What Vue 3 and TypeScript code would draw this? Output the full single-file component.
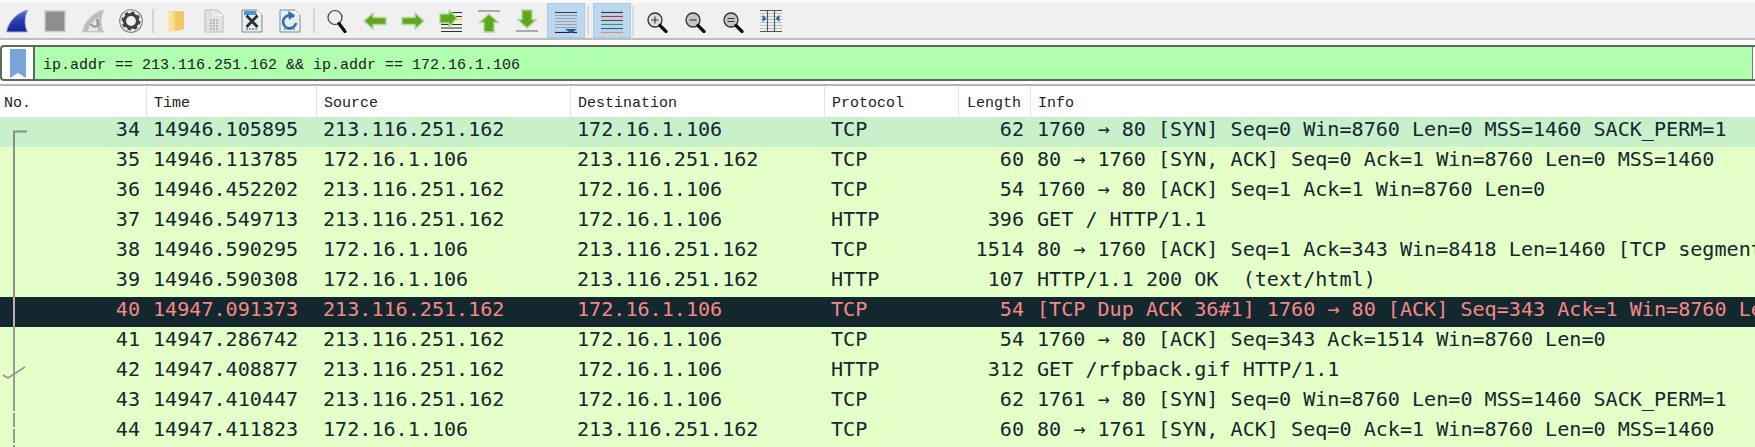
<script setup lang="ts">
type Row = { no: number; time: string; src: string; dst: string; proto: string; len: number; info: string; kind?: string }
const A = '213.116.251.162'
const B = '172.16.1.106'
const rows: Row[] = [
  { no: 34, time: '14946.105895', src: A, dst: B, proto: 'TCP', len: 62, info: '1760 → 80 [SYN] Seq=0 Win=8760 Len=0 MSS=1460 SACK_PERM=1', kind: 'sel' },
  { no: 35, time: '14946.113785', src: B, dst: A, proto: 'TCP', len: 60, info: '80 → 1760 [SYN, ACK] Seq=0 Ack=1 Win=8760 Len=0 MSS=1460' },
  { no: 36, time: '14946.452202', src: A, dst: B, proto: 'TCP', len: 54, info: '1760 → 80 [ACK] Seq=1 Ack=1 Win=8760 Len=0' },
  { no: 37, time: '14946.549713', src: A, dst: B, proto: 'HTTP', len: 396, info: 'GET / HTTP/1.1' },
  { no: 38, time: '14946.590295', src: B, dst: A, proto: 'TCP', len: 1514, info: '80 → 1760 [ACK] Seq=1 Ack=343 Win=8418 Len=1460 [TCP segment of a reassembled PDU]' },
  { no: 39, time: '14946.590308', src: B, dst: A, proto: 'HTTP', len: 107, info: 'HTTP/1.1 200 OK  (text/html)' },
  { no: 40, time: '14947.091373', src: A, dst: B, proto: 'TCP', len: 54, info: '[TCP Dup ACK 36#1] 1760 → 80 [ACK] Seq=343 Ack=1 Win=8760 Len=0', kind: 'bad' },
  { no: 41, time: '14947.286742', src: A, dst: B, proto: 'TCP', len: 54, info: '1760 → 80 [ACK] Seq=343 Ack=1514 Win=8760 Len=0' },
  { no: 42, time: '14947.408877', src: A, dst: B, proto: 'HTTP', len: 312, info: 'GET /rfpback.gif HTTP/1.1' },
  { no: 43, time: '14947.410447', src: A, dst: B, proto: 'TCP', len: 62, info: '1761 → 80 [SYN] Seq=0 Win=8760 Len=0 MSS=1460 SACK_PERM=1' },
  { no: 44, time: '14947.411823', src: B, dst: A, proto: 'TCP', len: 60, info: '80 → 1761 [SYN, ACK] Seq=0 Ack=1 Win=8760 Len=0 MSS=1460' },
]
</script>

<template>
  <div class="app">
    <div class="toolbar">
      <span class="tb"><svg viewBox="0 0 24 24"><defs><linearGradient id="fin" x1="0" y1="0" x2="0.2" y2="1"><stop offset="0" stop-color="#7d97e2"/><stop offset="0.55" stop-color="#2b3fb4"/><stop offset="1" stop-color="#18249a"/></linearGradient></defs><path d="M1.500 23C3 13 12 3 23 1c-3.500 6-4 15-.5 22z" fill="url(#fin)" stroke="#a3aed6"/></svg></span>
      <span class="tb"><svg viewBox="0 0 24 24"><rect x="2" y="2" width="20" height="20.500" fill="#8e8e8e" stroke="#c9c9c9" stroke-width="1.500"/></svg></span>
      <span class="tb"><svg viewBox="0 0 24 24"><path d="M1.500 23C3 13 12 3 23 1c-3.500 6-4 15-.5 22z" fill="#bcbcbc" stroke="#cfcfcf"/><path d="M7 22c1-6 6-11 11-14-2 4-2 10-1 14z" fill="#e6e6e6"/><path d="M10 15a4 4 0 0 0 7 1l-1-6" fill="none" stroke="#8f8f8f" stroke-width="2"/></svg></span>
      <span class="tb"><svg viewBox="0 0 24 24"><circle cx="12" cy="12" r="11.300" fill="#f0f0f0" stroke="#7f7f7f" stroke-width="1.100"/><circle cx="12" cy="12" r="6.500" fill="none" stroke="#3f3f3f" stroke-width="3.200"/><circle cx="12" cy="12" r="8.500" fill="none" stroke="#3f3f3f" stroke-width="2" stroke-dasharray="3.400 3.270"/></svg></span>
      <span class="sep s1"></span>
      <span class="tb"><svg viewBox="0 0 24 24"><defs><linearGradient id="fold" x1="0" y1="0" x2="1" y2="0"><stop offset="0" stop-color="#fdeaa8"/><stop offset="1" stop-color="#edc15a"/></linearGradient></defs><path d="M4 2h15l1 1v17l-10 2-5 1-1-1z" fill="url(#fold)"/><path d="M11 3h9v17l-9 2z" fill="#f0c964"/></svg></span>
      <span class="tb"><svg viewBox="0 0 24 24"><path d="M3 1h13l5 5v17H3z" fill="#e2e2e2" stroke="#bcbcbc"/><path d="M11 1l1 5h9" fill="none" stroke="#fff"/><path d="M8 11h9M8 14h9M8 17h9M8 20h9" stroke="#a8a8a8" stroke-width="1.600" stroke-dasharray="2 1"/></svg></span>
      <span class="tb"><svg viewBox="0 0 24 24"><path d="M2 1h15l5 5v17H2z" fill="#e8eef0" stroke="#7d8b92"/><path d="M4 2h12l1 4H4z" fill="#4c95d2"/><path d="M17 1l5 5h-5z" fill="#fff"/><path d="M6 20h12" stroke="#9a9a9a" stroke-width="2" stroke-dasharray="2 1"/><path d="M6.500 6.500l11 11.500M17.500 6.500l-11 11.500" stroke="#2d2d2d" stroke-width="2.800"/></svg></span>
      <span class="tb"><svg viewBox="0 0 24 24"><path d="M2 1h15l5 5v17H2z" fill="#e8eef0" stroke="#7d8b92"/><path d="M17 1l5 5h-5z" fill="#fff"/><path d="M6 20h12" stroke="#9a9a9a" stroke-width="2" stroke-dasharray="2 1"/><path d="M16 8a6.500 6.500 0 1 0 2 6" fill="none" stroke="#2c6fb0" stroke-width="2.600"/><path d="M10 2l7 4-6 5z" fill="#2c6fb0"/></svg></span>
      <span class="sep s2"></span>
      <span class="tb"><svg viewBox="0 0 24 24"><circle cx="10" cy="8.500" r="7" fill="#f0f0f0" stroke="#3a3a3a" stroke-width="1.200"/><path d="M14 14.500l6 8" stroke="#0e0e0e" stroke-width="3.200" stroke-linecap="round"/></svg></span>
      <span class="tb"><svg viewBox="0 0 24 24"><path d="M1 12l9-8v4.500h13v7H10V20z" fill="#5fa81e" stroke="#b4d6a0" stroke-width="1.600" stroke-linejoin="round"/></svg></span>
      <span class="tb"><svg viewBox="0 0 24 24"><path d="M23 12l-9-8v4.500H1v7h13V20z" fill="#5fa81e" stroke="#b4d6a0" stroke-width="1.600" stroke-linejoin="round"/></svg></span>
      <span class="tb"><svg viewBox="0 0 24 24"><path d="M12 3.500h11M14 7.500h9M2 15.500h21M2 19h21M2 22.500h21" stroke="#2f2f2f" stroke-width="1.200"/><path d="M16 9h7v3h-7z" fill="#f3e580"/><path d="M18 9l-8-8v4H1v9h9v4z" fill="#5fa81e" stroke="#b4d6a0" stroke-width="1.300" stroke-linejoin="round"/></svg></span>
      <span class="tb"><svg viewBox="0 0 24 24"><path d="M1 2h22" stroke="#9a9a9a" stroke-width="1.600"/><path d="M12 5l9.500 8.500H17V23H7v-9.500H2.500z" fill="#5fa81e" stroke="#b4d6a0" stroke-width="1.500" stroke-linejoin="round"/></svg></span>
      <span class="tb"><svg viewBox="0 0 24 24"><path d="M1 22h22" stroke="#9a9a9a" stroke-width="1.600"/><path d="M12 19l9.500-8.500H17V1H7v9.500H2.500z" fill="#5fa81e" stroke="#b4d6a0" stroke-width="1.500" stroke-linejoin="round"/></svg></span>
      <span class="tb on first"><svg viewBox="0 0 24 24"><path d="M1 3.500h22" stroke="#3a3a3a"/><path d="M1 6.500h22M1 9.500h22M1 12.500h22M1 15.500h22M1 18.500h22" stroke="#a0a0a0"/><path d="M1 23.500h22" stroke="#222" stroke-width="1.200"/><path d="M11 20h12l-6 4.500z" fill="#27599f"/></svg></span>
      <span class="sep short a"></span>
      <span class="tb on"><svg viewBox="0 0 24 24"><path d="M1 3.500h22" stroke="#4a3434" stroke-width="1.200"/><path d="M1 7.500h22" stroke="#c2304a" stroke-width="1.200"/><path d="M1 11.500h22" stroke="#555" stroke-width="1.200"/><path d="M1 15.500h22" stroke="#3f9a4a" stroke-width="1.200"/><path d="M1 19.500h22" stroke="#2f5fa8" stroke-width="1.200"/><path d="M1 23.500h22" stroke="#dd9a2a" stroke-width="1.200"/></svg></span>
      <span class="sep short b"></span>
      <span class="tb"><svg viewBox="0 0 24 24"><circle cx="10" cy="11" r="7" fill="#dcdcdc" stroke="#2f2f2f" stroke-width="1.300"/><path d="M6.500 11h7M10 7.500v7" stroke="#333" stroke-width="1.100"/><path d="M15 16.500l6 6" stroke="#0e0e0e" stroke-width="3.200" stroke-linecap="round"/></svg></span>
      <span class="tb"><svg viewBox="0 0 24 24"><circle cx="10" cy="11" r="7" fill="#c6c6c6" stroke="#2f2f2f" stroke-width="1.300"/><path d="M6.500 11h7" stroke="#333" stroke-width="1.100"/><path d="M15 16.500l6 6" stroke="#0e0e0e" stroke-width="3.200" stroke-linecap="round"/></svg></span>
      <span class="tb"><svg viewBox="0 0 24 24"><circle cx="10" cy="11" r="7" fill="#c6c6c6" stroke="#2f2f2f" stroke-width="1.300"/><path d="M6.500 9.500h7M6.500 12.500h7" stroke="#333" stroke-width="1.100"/><path d="M15 16.500l6 6" stroke="#0e0e0e" stroke-width="3.200" stroke-linecap="round"/></svg></span>
      <span class="tb"><svg viewBox="0 0 24 24"><path d="M1 4.500h22M1 7.500h22M1 10.500h22M1 13.500h22M1 16.500h22M1 19.500h22" stroke="#b5c2cc"/><path d="M1 1.500h22M1 22.500h22" stroke="#555"/><path d="M8.500 1v22M15.500 1v22" stroke="#555" stroke-width="1.100"/><path d="M3.500 6l4 3.500-4 3.500zM20.500 6l-4 3.500 4 3.500z" fill="#2a5da8"/></svg></span>
    </div>

    <div class="filterbar">
      <span class="bookmark"><svg viewBox="0 0 16 29" width="16" height="29"><path d="M0 0h16v29l-8-5-8 5z" fill="#7ba5d9"/></svg></span>
      <span class="filter">ip.addr == 213.116.251.162 &amp;&amp; ip.addr == 172.16.1.106</span>
      <span class="endcap"></span>
    </div>

    <div class="head">
      <span class="c no hd">No.</span>
      <span class="c time hd">Time</span>
      <span class="c src hd">Source</span>
      <span class="c dst hd">Destination</span>
      <span class="c proto hd">Protocol</span>
      <span class="c len hd lenhd">Length</span>
      <span class="c info hd">Info</span>
    </div>

    <div class="list">
      <div v-for="r in rows" :key="r.no" class="row" :class="r.kind">
        <span class="c no num">{{ r.no }}</span>
        <span class="c time">{{ r.time }}</span>
        <span class="c src">{{ r.src }}</span>
        <span class="c dst">{{ r.dst }}</span>
        <span class="c proto">{{ r.proto }}</span>
        <span class="c len num">{{ r.len }}</span>
        <span class="c info">{{ r.info }}</span>
      </div>
      <svg class="conv" width="40" height="330" viewBox="0 0 40 330">
        <path d="M27 14.500H14V180" fill="none" stroke="#8e8e8e" stroke-width="2"/>
        <path d="M14 180V209" fill="none" stroke="#c4b0b0" stroke-width="2"/>
        <path d="M14 209V280" fill="none" stroke="#9a9a9a" stroke-width="2"/>
        <path d="M14 280V330" fill="none" stroke="#9a9a9a" stroke-width="2" stroke-dasharray="14 2"/>
        <path d="M3 258l5 3 17-11" fill="none" stroke="#949494" stroke-width="1.500"/>
      </svg>
    </div>
  </div>
</template>

<style scoped>
.app { width: 1755px; height: 447px; overflow: hidden; background: #fff; display: flex; flex-direction: column; }
.toolbar { height: 35px; padding: 3px 0 0; background: linear-gradient(#fafafa 3px, #f0f0f0 3px); border-bottom: 2px solid #bdbdbd; display: flex; align-items: center; box-sizing: content-box; }
.tb { width: 38px; height: 35px; display: flex; align-items: center; justify-content: center; box-sizing: border-box; flex: none; }
.tb:first-child { margin-left: -2px; }
.tb svg { width: 24px; height: 24px; }
.tb.on { background: #bcd7f0; border: 1px solid #a9cbe8; }
.tb.first { margin-left: 1px; }
.sep { width: 2px; height: 24px; background: #d4d4d4; flex: none; }
.s1 { margin: 0 3px 0 2px; }
.s2 { margin: 0 3px 0 4px; }
.sep.short { height: 30px; background: #dcdcdc; }
.sep.a { margin: 0 4px 0 2px; }
.sep.b { margin: 0 4px 0 1px; }
.filterbar { height: 36px; margin-top: 5px; border: 2px solid #5c6a5e; border-right: none; border-radius: 4px 0 0 4px; display: flex; background: #afffaf; box-sizing: border-box; }
.bookmark { width: 33px; background: #fff; border-right: 2px solid #5c6a5e; display: flex; align-items: center; justify-content: center; flex: none; border-radius: 3px 0 0 3px; box-sizing: border-box; }
.filter { font: 15px/37px "Liberation Mono", monospace; padding-left: 8px; color: #1a1a1a; flex: 1; }
.endcap { width: 2px; background: #fff; border-left: 1px solid #777; flex: none; }
.head { height: 33px; margin-top: 3px; border-top: 2px solid #b4b4b4; display: flex; background: #fff; font: 15px/35px "Liberation Mono", monospace; color: #222; box-sizing: border-box; }
.hd { border-left: 1px solid #e2e2e2; }
.hd.no { border-left: none; }
.list { position: relative; flex: 1; overflow: hidden; }
.row { height: 30px; display: flex; background: #e4ffc7; color: #12272e; font: 20.1px/25px "DejaVu Sans Mono", monospace; white-space: pre; }
.row.sel { background: #c8f0ca; }
.row.bad { background: #12272e; color: #f78787; }
.c { flex: none; padding-left: 7px; box-sizing: border-box; white-space: pre; overflow: hidden; }
.no { width: 146px; padding-left: 4px; }
.time { width: 170px; }
.src { width: 254px; }
.dst { width: 254px; }
.proto { width: 134px; }
.len { width: 72px; }
.info { flex: 1; }
.num { text-align: right; padding: 0 6px 0 0; }
.lenhd { padding-left: 8px; }
.conv { position: absolute; left: 0; top: 0; pointer-events: none; }
</style>
